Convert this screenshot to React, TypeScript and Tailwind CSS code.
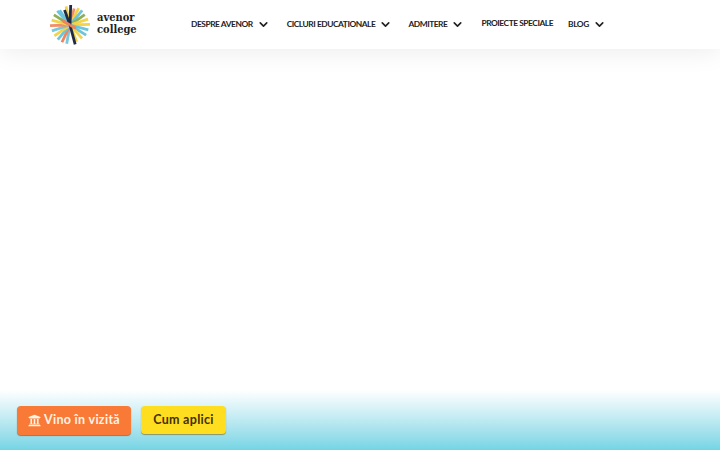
import { ChevronDown } from "lucide-react";
import { FaUniversity } from "react-icons/fa";

// angle in degrees from the top, clockwise; r = length from centre
const rays = [
  { a: -35, r: 18, c: "#6cc5dd" },
  { a: 318, r: 19, c: "#6cc5dd" },
  { a: -12, r: 19, c: "#f3d34a" },
  { a: 158, r: 18, c: "#f3d34a" },
  { a: 14, r: 17, c: "#f0906a" },
  { a: 190, r: 19, c: "#7ac8dc" },
  { a: 27, r: 19, c: "#f3d34a" },
  { a: 205, r: 19, c: "#f0825c" },
  { a: 40, r: 19, c: "#6cc5dd" },
  { a: 220, r: 19, c: "#6cc5dd" },
  { a: 55, r: 18, c: "#8fae5a" },
  { a: 235, r: 19, c: "#f3d34a" },
  { a: 72, r: 19, c: "#f3d34a" },
  { a: 252, r: 19, c: "#7ac8dc" },
  { a: 88, r: 20, c: "#f3d34a" },
  { a: 268, r: 20, c: "#f0906a" },
  { a: 105, r: 19, c: "#6cc5dd" },
  { a: 285, r: 19, c: "#f3d34a" },
  { a: 122, r: 19, c: "#6cc5dd" },
  { a: 302, r: 19, c: "#8fae5a" },
  { a: 138, r: 18, c: "#f3d34a" },
  { a: 2, r: 20, c: "#1f2a44" },
  { a: -20, r: 16, c: "#1f2a44" },
  { a: 165, r: 20, c: "#1f2a44" },
  { a: 120, r: 7, c: "#f0825c" },
  { a: 300, r: 9, c: "#f0825c" },
];

function Logo() {
  return (
    <svg width="40" height="40" viewBox="-20 -20 40 40" className="shrink-0">
      {rays.map((ray, i) => {
        const rad = (ray.a * Math.PI) / 180;
        return (
          <line
            key={i}
            x1={0}
            y1={0}
            x2={Math.sin(rad) * ray.r}
            y2={-Math.cos(rad) * ray.r}
            stroke={ray.c}
            strokeWidth={2.8}
          />
        );
      })}
    </svg>
  );
}

function NavItem({ label, caret = true, className = "" }: { label: string; caret?: boolean; className?: string }) {
  return (
    <div className={`flex items-center text-[8.4px] font-bold tracking-[-0.45px] text-[#222] ${className}`}>
      <span>{label}</span>
      {caret && <ChevronDown size={13} strokeWidth={3} className="ml-[4px] text-[#222]" />}
    </div>
  );
}

export default function App() {
  return (
    <div className="flex h-[450px] w-[720px] flex-col justify-between overflow-hidden bg-white font-['Lato',sans-serif]">
      <header className="flex h-[49px] items-center bg-white pl-[50px] shadow-[0_4px_24px_rgba(0,0,0,0.07)]">
        <Logo />
        <div className="ml-[7px] w-[38px] -translate-y-px font-['DejaVu_Serif',serif] text-[11px] leading-[12px] font-bold text-[#222] [font-stretch:condensed]">
          <div>avenor</div>
          <div>college</div>
        </div>
        <nav className="ml-[56px] flex items-center">
          <NavItem label="DESPRE AVENOR" />
          <NavItem label="CICLURI EDUCAȚIONALE" className="ml-[17px]" />
          <NavItem label="ADMITERE" className="ml-[16px]" />
          <NavItem label="PROIECTE SPECIALE" caret={false} className="ml-[17px] -translate-y-px" />
          <NavItem label="BLOG" className="ml-[15px]" />
        </nav>
      </header>
      <div className="flex h-[60px] items-center gap-[10px] bg-gradient-to-b from-white to-[#74d4e4] pl-[17px] font-['Lato',sans-serif] text-[12.5px] font-bold">
        <button className="flex h-[29px] w-[114px] items-center justify-center gap-[3px] rounded-[4px] bg-[#f97a36] tracking-[0.3px] text-[#fff3e4] shadow-[0_1px_1px_rgba(120,60,20,0.6)]">
          <FaUniversity size={13} />
          Vino în vizită
        </button>
        <button className="flex h-[28px] w-[85px] items-center justify-center rounded-[4px] bg-[#ffdd1f] tracking-[0.3px] text-[#43310a] shadow-[0_1px_1px_rgba(120,100,20,0.6)]">
          Cum aplici
        </button>
      </div>
    </div>
  );
}
